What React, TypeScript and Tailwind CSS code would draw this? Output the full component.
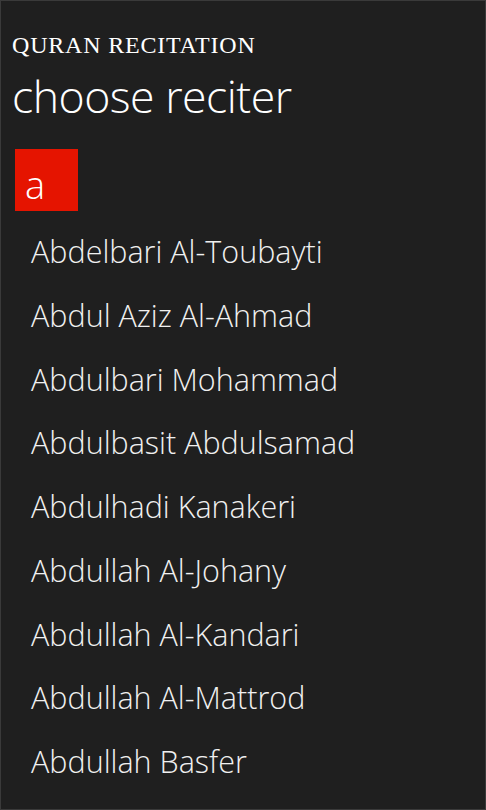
import React from 'react';

const reciters = [
  'Abdelbari Al-Toubayti',
  'Abdul Aziz Al-Ahmad',
  'Abdulbari Mohammad',
  'Abdulbasit Abdulsamad',
  'Abdulhadi Kanakeri',
  'Abdullah Al-Johany',
  'Abdullah Al-Kandari',
  'Abdullah Al-Mattrod',
  'Abdullah Basfer',
];

export default function App() {
  return (
    <div className="w-[486px] h-[810px] overflow-hidden bg-[#1f1f1f] border border-[#3a3a3a] text-white">
      <div className="pl-[11px] pt-[30px]">
        <div className="text-[24px] leading-[28px] uppercase font-['Liberation_Serif',serif] tracking-[0.8px]">
          Quran Recitation
        </div>
        <div className="mt-[10px] text-[44.6px] leading-[54px] font-light font-['Open_Sans',sans-serif] tracking-[-0.5px]">
          choose reciter
        </div>
      </div>

      <div className="mt-[26px] ml-[14px] w-[63px] h-[62px] bg-[#e51400] flex items-end pl-[10px] pb-[4px]">
        <span className="text-[38px] leading-[46px] font-light font-['Open_Sans',sans-serif]">a</span>
      </div>

      <ul className="mt-[9px]">
        {reciters.map((name) => (
          <li
            key={name}
            className="h-[63.75px] flex items-center pl-[30px] text-[30.5px] font-light font-['Open_Sans',sans-serif] text-[#f0f0f0]"
          >
            {name}
          </li>
        ))}
      </ul>
    </div>
  );
}
